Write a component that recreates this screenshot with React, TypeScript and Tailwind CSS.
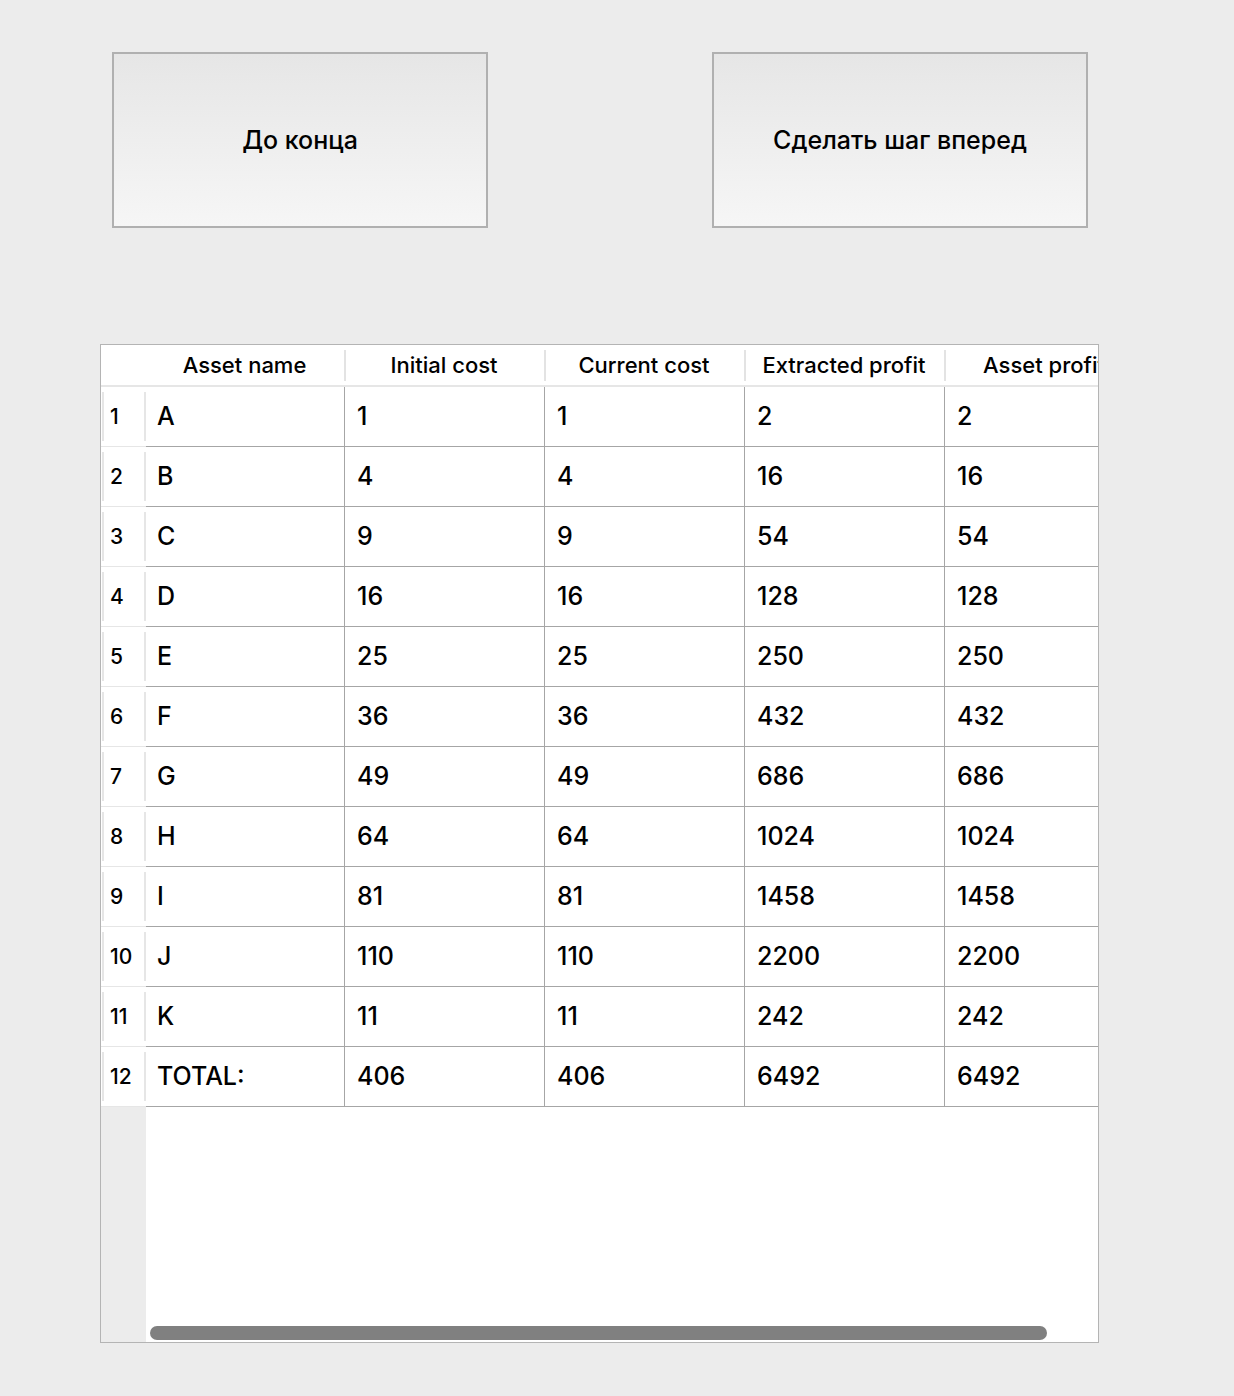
import React from "react";

const cols = ["Asset name", "Initial cost", "Current cost", "Extracted profit", "Asset profit"];
const rows: string[][] = [
  ["A", "1", "1", "2", "2"],
  ["B", "4", "4", "16", "16"],
  ["C", "9", "9", "54", "54"],
  ["D", "16", "16", "128", "128"],
  ["E", "25", "25", "250", "250"],
  ["F", "36", "36", "432", "432"],
  ["G", "49", "49", "686", "686"],
  ["H", "64", "64", "1024", "1024"],
  ["I", "81", "81", "1458", "1458"],
  ["J", "110", "110", "2200", "2200"],
  ["K", "11", "11", "242", "242"],
  ["TOTAL:", "406", "406", "6492", "6492"],
];

function Btn({ label }: { label: string }) {
  return (
    <div className="w-[376px] h-[176px] border-2 border-[#b0b0b0] bg-gradient-to-b from-[#e6e6e6] to-[#f6f6f6] flex items-center justify-center pt-[2px] text-[25px] font-medium text-black">
      {label}
    </div>
  );
}

export default function App() {
  return (
    <div
      className="w-[1234px] h-[1396px] bg-[#ececec] text-black"
      style={{ fontFamily: "Inter, 'Noto Sans', sans-serif" }}
    >
      <div className="flex pt-[52px] pl-[112px] gap-[224px]">
        <Btn label="До конца" />
        <Btn label="Сделать шаг вперед" />
      </div>
      <div className="ml-[100px] mt-[116px] w-[999px] h-[999px] border border-[#b4b4b4] bg-white flex overflow-hidden">
        {/* row header column */}
        <div className="w-[45px] flex flex-col shrink-0">
          <div className="h-[42px] border-b-2 border-[#e6e6e6] bg-white shrink-0" />
          {rows.map((_, i) => (
            <div key={i} className="h-[60px] shrink-0 border-b border-[#e6e6e6] bg-white flex">
              <div className="w-[2px] my-[5px] ml-[1px] bg-[#e6e6e6]" />
              <div className="flex-1 flex items-center pl-[6px] text-[21px] font-medium">{i + 1}</div>
              <div className="w-[2px] my-[5px] bg-[#e6e6e6]" />
            </div>
          ))}
          <div className="flex-1 bg-[#ececec]" />
        </div>
        {/* body */}
        <div className="flex-1 flex flex-col overflow-hidden">
          <div className="h-[42px] border-b-2 border-[#e6e6e6] flex shrink-0 w-[1000px]">
            {cols.map((c, j) => (
              <div
                key={c}
                className={`${j === 0 ? "w-[199px]" : "w-[200px]"} shrink-0 flex items-center`}
              >
                <div className="flex-1 text-center text-[22px] font-medium whitespace-nowrap">{c}</div>
                <div className="w-[2px] h-[31px] bg-[#e3e3e3] self-center translate-x-[1px]" />
              </div>
            ))}
          </div>
          {rows.map((r, i) => (
            <div key={i} className="h-[60px] shrink-0 flex border-b border-[#a6a6a6] w-[1000px]">
              {r.map((v, j) => (
                <div
                  key={j}
                  className={`${j === 0 ? "w-[199px] pl-[11px]" : "w-[200px] pl-[12px]"} shrink-0 border-r border-[#a6a6a6] flex items-center text-[25px] font-medium whitespace-nowrap`}
                >
                  {v}
                </div>
              ))}
            </div>
          ))}
          <div className="flex-1" />
          <div className="h-[14px] w-[897px] ml-[4px] mb-[2px] rounded-full bg-[#808080] shrink-0" />
        </div>
      </div>
    </div>
  );
}
